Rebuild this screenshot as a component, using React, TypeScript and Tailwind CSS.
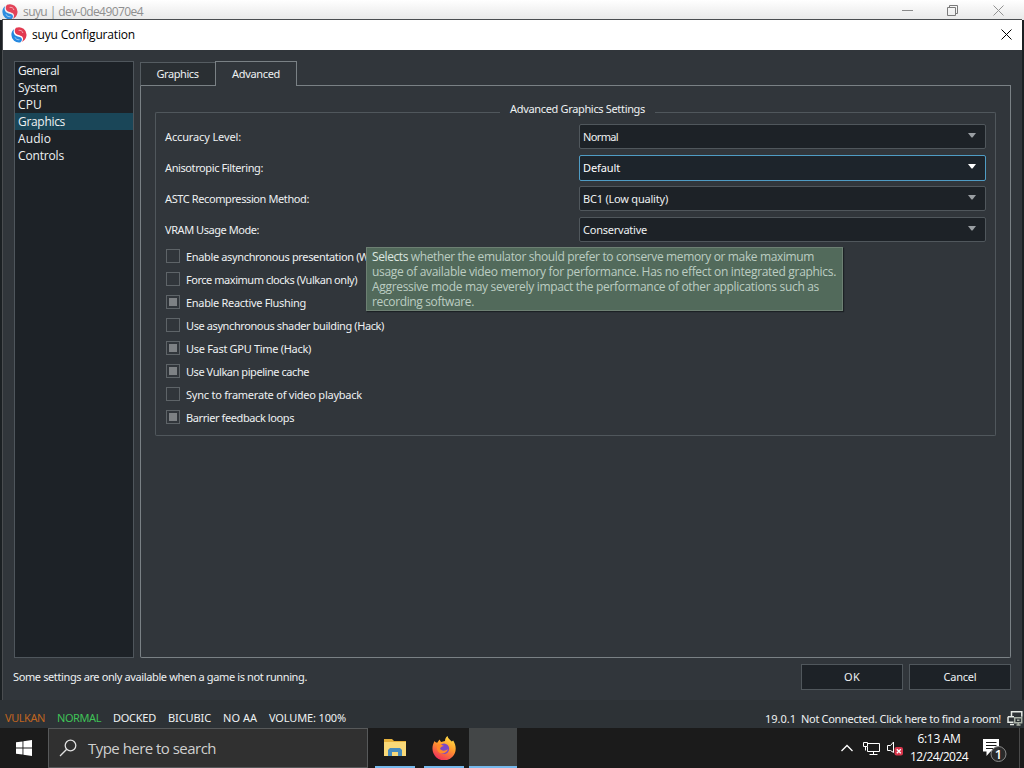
import { useLayoutEffect, useRef, useState } from "react";

type FitProps = { w: number; children: string; className?: string };

/** Single line of text whose letter spacing is computed so it spans `w` pixels. */
function Fit({ w, children, className = "" }: FitProps) {
  const ref = useRef<HTMLSpanElement>(null);
  const [spacing, setSpacing] = useState(0);
  useLayoutEffect(() => {
    if (ref.current) {
      const natural = ref.current.getBoundingClientRect().width;
      setSpacing((w - natural) / children.length);
    }
  }, []);
  return (
    <span ref={ref} className={`inline-block whitespace-pre ${className}`} style={{ letterSpacing: spacing }}>
      {children}
    </span>
  );
}

function Logo({ faded = false }: { faded?: boolean }) {
  return (
    <svg viewBox="0 0 16 16" className={faded ? "size-4 shrink-0 opacity-95" : "size-4 shrink-0"}>
      <path d="M5 .8A7.6 7.6 0 0 1 15.4 9C15 12 13 14 10.600 15C12.500 13 12.600 10.300 10.300 9C8 7.700 5.300 8 4.200 5.700C3.400 4 3.800 2 5 .8Z" fill="#e23a50" />
      <path d="M3.400 1.900C1.300 3.200 .3 5.500 .4 8A7.500 7.500 0 0 0 9.200 15.400C11.300 14.200 11.700 11.500 9.500 10.200C7.300 9 4.600 9.400 3.200 6.900C2.300 5.300 2.500 3.300 3.400 1.900Z" fill="#2488e0" />
      <path d="M7.600 3.400c2-.5 3.800.5 4.300 2.600" fill="none" stroke="#fff" strokeWidth="1" opacity=".55" />
      <path d="M4 10.300c.8 1.900 2.500 2.800 4.500 2.400" fill="none" stroke="#fff" strokeWidth="1" opacity=".55" />
    </svg>
  );
}

function Cross({ className }: { className: string }) {
  return (
    <svg viewBox="0 0 11 11" className={`size-[11px] ${className}`} fill="none" stroke="currentColor">
      <path d="M.5 .5l10 10M10.500 .5l-10 10" />
    </svg>
  );
}

const categories: [string, number][] = [
  ["General", 41],
  ["System", 39],
  ["CPU", 24],
  ["Graphics", 47],
  ["Audio", 33],
  ["Controls", 46],
];

const combos: [string, number, string, number][] = [
  ["Accuracy Level:", 76, "Normal", 35],
  ["Anisotropic Filtering:", 98, "Default", 37],
  ["ASTC Recompression Method:", 144, "BC1 (Low quality)", 85],
  ["VRAM Usage Mode:", 94, "Conservative", 64],
];

const checks: [string, number, boolean][] = [
  ["Enable asynchronous presentation (W", 183, false],
  ["Force maximum clocks (Vulkan only)", 171, false],
  ["Enable Reactive Flushing", 120, true],
  ["Use asynchronous shader building (Hack)", 198, false],
  ["Use Fast GPU Time (Hack)", 125, true],
  ["Use Vulkan pipeline cache", 123, true],
  ["Sync to framerate of video playback", 176, false],
  ["Barrier feedback loops", 108, true],
];

function Sidebar() {
  return (
    <div className="h-[597px] w-[120px] shrink-0 border border-[#4f565c] bg-[#1d2227] font-['Open_Sans',sans-serif] text-[12px] text-[#eef1f2]">
      {categories.map(([name, w]) => (
        <div key={name} className={name === "Graphics" ? "flex h-[17px] items-center bg-[#1a4658] pl-[3px]" : "flex h-[17px] items-center pl-[3px]"}>
          <Fit w={w}>{name}</Fit>
        </div>
      ))}
    </div>
  );
}

function Combo({ value, w, focused }: { value: string; w: number; focused: boolean }) {
  return (
    <div
      className={
        focused
          ? "flex h-[26px] w-[407px] items-center justify-between rounded-[2px] border border-[#4f9cc4] bg-[#1d242b] pr-[9px] pl-[3px] text-white"
          : "flex h-[25px] w-[407px] items-center justify-between rounded-[2px] border border-[#50575c] bg-[#1d2227] pr-[9px] pl-[3px]"
      }
    >
      <Fit w={w} className="pt-[2px]">{value}</Fit>
      <svg viewBox="0 0 8 5" className={focused ? "mb-[2px] h-[5px] w-2 text-white" : "mb-[2px] h-[5px] w-2 text-[#9a9fa3]"}>
        <path d="M0 0h8L4.500 4.500h-1z" fill="currentColor" />
      </svg>
    </div>
  );
}

function GroupBox() {
  return (
    <div className="ml-[14px] w-[841px]">
      <div className="flex h-[9px] items-end">
        <div className="h-[5px] w-[345px] rounded-tl-[2px] border-t border-l border-[#50575c]" />
        <div className="flex h-[15px] w-[155px] items-center justify-center">
          <Fit w={135}>Advanced Graphics Settings</Fit>
        </div>
        <div className="h-[5px] grow rounded-tr-[2px] border-t border-r border-[#50575c]" />
      </div>
      <div className="h-[319px] rounded-b-[2px] border border-t-0 border-[#50575c] pt-[4px] pr-[9px] pl-[9px]">
        {combos.map(([label, lw, value, vw], i) => (
          <div key={label} className="flex h-[31px] items-center justify-between">
            <Fit w={lw} className="pt-[2px]">{label}</Fit>
            <Combo value={value} w={vw} focused={i === 1} />
          </div>
        ))}
        {checks.map(([label, w, on]) => (
          <div key={label} className="flex h-[23px] items-center pl-[1px]">
            <div className="mb-[2px] flex size-[14px] items-center justify-center border border-[#5e6468]">
              {on && <div className="size-2 bg-[#7d8184]" />}
            </div>
            <Fit w={w} className="ml-[6px] pt-[2px]">{label}</Fit>
          </div>
        ))}
      </div>
    </div>
  );
}

function TabArea() {
  return (
    <div className="ml-[6px] w-[871px]">
      <div className="flex h-[25px] items-end">
        <div className="flex h-[24px] w-[75px] items-center justify-center border border-r-0 border-[#555c61] border-b-[#7a8185] bg-[#2a2f33] pr-px">
          <Fit w={42}>Graphics</Fit>
        </div>
        <div className="flex h-[25px] w-[82px] items-center justify-center border border-b-0 border-[#7a8185]">
          <Fit w={48}>Advanced</Fit>
        </div>
        <div className="h-px grow bg-[#7a8185]" />
      </div>
      <div className="h-[572px] rounded-b-[2px] border border-t-0 border-[#7a8185] pt-[22px]">
        <GroupBox />
      </div>
    </div>
  );
}

function Tooltip() {
  return (
    <div className="absolute top-[227px] left-[363px] h-[64px] w-[477px] border border-[#6d8073] bg-[#526a5b] pt-px pl-[5px] font-['Open_Sans',sans-serif] text-[12px] leading-[15px] text-[#bccdc2] shadow-[1px_1px_1px_#1c2124]">
      <div className="flex">
        <Fit w={36} className="text-[#dde8e0]">Selects</Fit>
        <Fit w={406}> whether the emulator should prefer to conserve memory or make maximum</Fit>
      </div>
      <div><Fit w={464}>usage of available video memory for performance. Has no effect on integrated graphics.</Fit></div>
      <div><Fit w={447}>Aggressive mode may severely impact the performance of other applications such as</Fit></div>
      <div><Fit w={102}>recording software.</Fit></div>
    </div>
  );
}

function Dialog() {
  return (
    <div className="absolute top-[19px] left-[2px] h-[681px] w-[1020px] border-t border-l border-[#4a4d50] bg-[#31363b]">
      <div className="flex h-[30px] items-center bg-white pr-[10px] pl-[8px] font-['Open_Sans',sans-serif] text-[12px] text-black">
        <Logo />
        <Fit w={103} className="ml-[5px]">suyu Configuration</Fit>
        <Cross className="mb-[2px] ml-auto text-black" />
      </div>
      <div className="flex pt-[11px] pl-[11px]">
        <Sidebar />
        <TabArea />
      </div>
      <div className="flex h-[37px] items-center gap-[6px] pr-[11px] pl-[10px]">
        <Fit w={294} className="pt-[2px]">Some settings are only available when a game is not running.</Fit>
        <div className="ml-auto flex h-[26px] w-[102px] items-center justify-center border border-[#50575c] bg-[#1d2227] pt-[2px]">
          <Fit w={16}>OK</Fit>
        </div>
        <div className="flex h-[26px] w-[102px] items-center justify-center border border-[#50575c] bg-[#1d2227] pt-[2px]">
          <Fit w={33}>Cancel</Fit>
        </div>
      </div>
      <Tooltip />
    </div>
  );
}

function TitleBar() {
  return (
    <div className="flex h-[20px] items-center bg-linear-to-b from-white to-[#e8e8e8] pt-[3px] pr-[20px] pl-[2px] font-['Open_Sans',sans-serif] text-[12px] text-[#8f8f8f]">
      <Logo faded />
      <Fit w={120} className="ml-[5px]">suyu | dev-0de49070e4</Fit>
      <div className="mb-[2px] ml-auto h-px w-[11px] bg-[#8a8a8a]" />
      <svg viewBox="0 0 11 11" className="mb-[2px] ml-[34px] size-[11px]" fill="none" stroke="#7a7a7a">
        <path d="M.5 2.500h8v8h-8zM2.500 2.500v-2h8v8h-2" />
      </svg>
      <Cross className="mb-[2px] ml-[35px] text-[#929292]" />
    </div>
  );
}

function StatusBar() {
  return (
    <div className="flex h-[28px] items-center bg-[#2d3236] pt-[8px] pr-px pl-[5px]">
      <div className="flex gap-[12px]">
        <Fit w={40} className="text-[#c06520]">VULKAN</Fit>
        <Fit w={44} className="text-[#3fc257]">NORMAL</Fit>
        <Fit w={43}>DOCKED</Fit>
        <Fit w={43}>BICUBIC</Fit>
        <Fit w={34}>NO AA</Fit>
        <Fit w={77}>VOLUME: 100%</Fit>
      </div>
      <Fit w={31} className="ml-auto pt-[2px]">19.0.1</Fit>
      <Fit w={200} className="ml-[5px] pt-[2px]">Not Connected. Click here to find a room!</Fit>
      <svg viewBox="0 0 16 16" className="ml-[6px] size-4 shrink-0 text-[#e4e8e4]" fill="none" stroke="currentColor" strokeWidth="1.500">
        <path d="M4.500 6.500V1.700h10.300v5M1 6.700h6M1 6.700v5.600h5.500M3 14.500h4" />
        <path d="M7.700 7.700h7v5h-7zM9.500 15h4M11.200 13v2M10 10.200h2.500" stroke="#a9b1a7" />
      </svg>
    </div>
  );
}

function Taskbar() {
  return (
    <div className="flex h-[40px] bg-[#1b1b1b] font-['Open_Sans',sans-serif] text-white">
      <div className="flex w-[48px] items-center justify-center">
        <svg viewBox="0 0 16 16" className="size-4" fill="#fff">
          <path d="M0 2.300l6.500-.9v6.100H0zM7.400 1.300L16 0v7.500H7.400zM0 8.400h6.500v6.200L0 13.700zM7.400 8.400H16V16l-8.600-1.200z" />
        </svg>
      </div>
      <div className="flex w-[320px] items-center border border-[#57595a] bg-[#303030] pl-[10px] text-[15px] text-[#cfcfcf]">
        <svg viewBox="0 0 18 18" className="size-[18px]" fill="none" stroke="#e0e0e0" strokeWidth="1.300">
          <circle cx="11.500" cy="6.500" r="5.300" />
          <path d="M7.700 10.300L1 17" />
        </svg>
        <Fit w={128} className="ml-[11px]">Type here to search</Fit>
      </div>
      <div className="ml-[7px] flex h-full w-[40px] flex-col items-center justify-between border-b-2 border-[#76b9ed] pt-[10px]">
        <svg viewBox="0 0 22 19" className="h-[19px] w-[22px]">
          <path d="M0 1h8l2 2h12v15H0z" fill="#e6b13c" />
          <path d="M0 4h22v14H0z" fill="#f9d978" />
          <path d="M4 18v-6l2-2h10l2 2v6h-4v-4H8v4z" fill="#478bbd" />
        </svg>
      </div>
      <div className="ml-[9px] flex h-full w-[40px] flex-col items-center border-b-2 border-[#76b9ed] pt-[8px]">
        <svg viewBox="0 0 24 24" className="size-6">
          <defs>
            <linearGradient id="flame" x1=".8" y1="0" x2=".3" y2="1">
              <stop offset="0" stopColor="#ffe44a" />
              <stop offset=".45" stopColor="#ff9a2c" />
              <stop offset="1" stopColor="#f02c5c" />
            </linearGradient>
          </defs>
          <path d="M2.500 5c.7 1 1.500 1.500 2.700 1.800L7.500 3.500 9 6l4-1c0-2 .8-4 2.500-5 .5 2.500 2.500 3.800 4.300 5.500l1.400-1c1.600 3 2.500 5 2.500 8A11.600 11.600 0 0 1 .5 13C.3 10 1.300 7.500 2.500 5Z" fill="url(#flame)" />
          <circle cx="12" cy="12.800" r="5.200" fill="#7b49c8" />
          <path d="M5 9c3-1 5-.4 7 1-2 .1-3 1-4 2.500 1 2.500 5 3 8 .5-1 4-6 6-9 3.500C5 14.500 4.500 12 5 9Z" fill="#ff8a2a" />
        </svg>
      </div>
      <div className="ml-[5px] h-full w-[48px] border-b-2 border-[#76b9ed] bg-[#434647]" />
      <div className="ml-auto flex items-center">
        <svg viewBox="0 0 12 8" className="h-2 w-3" fill="none" stroke="#fff" strokeWidth="1.300">
          <path d="M.5 7L6 1.500 11.500 7" />
        </svg>
        <svg viewBox="0 0 17 15" className="ml-[10px] h-[15px] w-[17px]" fill="none" stroke="#fff">
          <path d="M5 2.500h11.500v8H4.500V6M.5 1.500h4v4h-4zM2.500 5.500v4M10.500 10.500v3M6.500 13.500h8" />
        </svg>
        <svg viewBox="0 0 17 15" className="ml-[7px] h-[15px] w-[17px]" fill="none" stroke="#fff">
          <path d="M6.500 11.500L3.500 9.500h-3v-5h3l3-3.500v10.500z" />
          <rect x="7.500" y="6" width="8.500" height="8.500" rx="2" fill="#d9354b" stroke="none" />
          <path d="M9.800 8.300l4 4M13.800 8.300l-4 4" strokeWidth="1.300" />
        </svg>
        <div className="ml-[5px] flex w-[60px] flex-col items-center text-[12px] leading-[18px]">
          <Fit w={43}>6:13 AM</Fit>
          <Fit w={58}>12/24/2024</Fit>
        </div>
        <svg viewBox="0 0 26 26" className="mt-[5px] ml-[13px] size-[26px]">
          <path d="M1 1h16v12.500H8.500L4.500 18v-4.500H1z" fill="#fff" />
          <path d="M4 4.500h10.500M4 7.500h10.500M4 10.500h7" stroke="#1b1b1b" />
          <circle cx="16.500" cy="16" r="7.500" fill="#2b2b2b" fillOpacity=".95" stroke="#8a8a8a" />
          <text x="16.500" y="20.800" fontSize="13" fontWeight="600" fill="#fff" textAnchor="middle">1</text>
        </svg>
        <div className="ml-[11px] h-10 w-px bg-[#4a4a4a]" />
        <div className="w-[4px]" />
      </div>
    </div>
  );
}

export default function App() {
  return (
    <div className="relative flex h-[768px] w-[1024px] flex-col overflow-hidden bg-[#1b2023] font-['Noto_Sans',sans-serif] text-[11px] text-[#eef1f2]">
      <TitleBar />
      <div className="grow bg-[#1b2023]" />
      <StatusBar />
      <Taskbar />
      <Dialog />
    </div>
  );
}
